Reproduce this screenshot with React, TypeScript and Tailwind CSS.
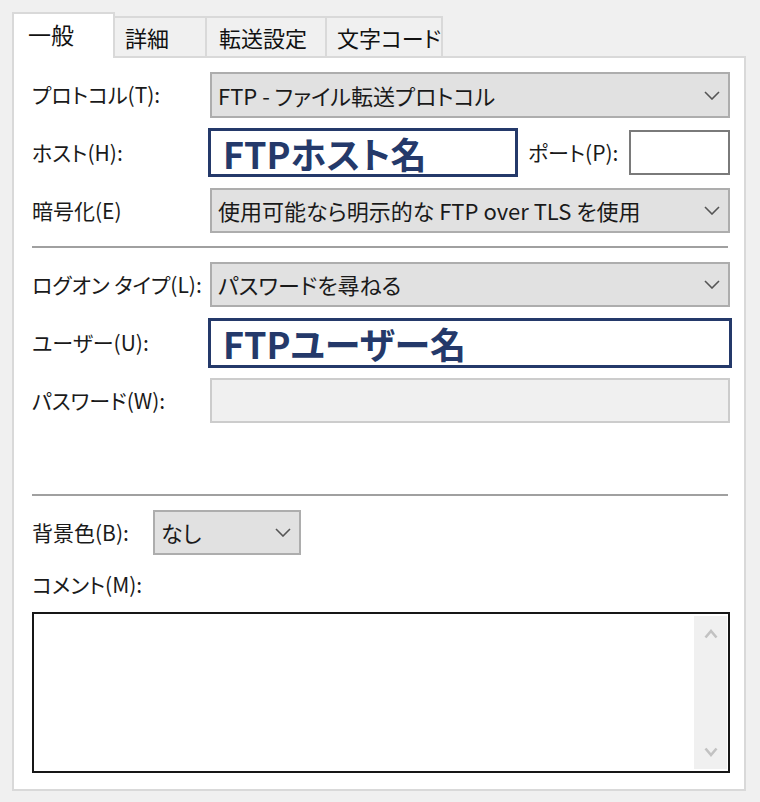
import React from 'react';

const font = "font-['Noto_Sans_CJK_JP','Noto_Sans',sans-serif] [font-feature-settings:'palt']";

function Chevron() {
  return (
    <svg width="16" height="9" viewBox="0 0 16 9" className="shrink-0">
      <polyline points="1,1 8,8 15,1" fill="none" stroke="#555555" strokeWidth="1.6" />
    </svg>
  );
}

function Select({ value, className = '' }: { value: string; className?: string }) {
  return (
    <div
      className={`flex items-center justify-between bg-[#e1e1e1] border-2 border-[#adadad] pl-[6px] pr-[8px] text-[22px] text-[#1a1a1a] ${className}`}
    >
      <span className="whitespace-nowrap">{value}</span>
      <Chevron />
    </div>
  );
}

function Label({ text, className = 'w-[178px]' }: { text: string; className?: string }) {
  return <div className={`shrink-0 text-[21px] text-[#1a1a1a] whitespace-nowrap ${className}`}>{text}</div>;
}

function NavyInput({ value, className = '' }: { value: string; className?: string }) {
  return (
    <div
      className={`flex items-center border-[3px] border-[#24396a] pl-[12px] text-[36px] font-bold text-[#24396a] leading-none ${className}`}
    >
      {value}
    </div>
  );
}

export default function App() {
  const tabs = [
    { label: '詳細', w: 'w-[92px]', pl: 'pl-[10px]' },
    { label: '転送設定', w: 'w-[120px]', pl: 'pl-[12px]' },
    { label: '文字コード', w: 'w-[116px]', pl: 'pl-[10px]' },
  ];

  return (
    <div className={`w-[760px] h-[802px] bg-[#f0f0f0] pt-[12px] pl-[12px] pr-[14px] ${font}`}>
      {/* tabs */}
      <div className="flex items-end h-[44px]">
        <div className="relative z-10 w-[103px] h-[46px] -mb-[2px] bg-white border-2 border-b-0 border-[#d9d9d9] pl-[14px] pt-[4px] text-[23px] leading-[32px] text-[#111]">
          一般
        </div>
        {tabs.map((tab) => (
          <div
            key={tab.label}
            className={`${tab.w} ${tab.pl} h-[40px] bg-[#f0f0f0] border-t-2 border-r-2 border-[#d9d9d9] pt-[3px] text-[22px] leading-[32px] text-[#111] whitespace-nowrap`}
          >
            {tab.label}
          </div>
        ))}
      </div>

      {/* panel */}
      <div className="bg-white border-2 border-[#d9d9d9] pt-[14px] pb-[16px] pl-[18px] pr-[14px]">
        <div className="flex items-center h-[46px]">
          <Label text="プロトコル(T):" />
          <Select value="FTP - ファイル転送プロトコル" className="flex-1 h-[46px]" />
        </div>

        <div className="flex items-center h-[49px] mt-[10px]">
          <Label text="ホスト(H):" />
          <NavyInput value="FTPホスト名" className="-ml-[2px] w-[310px] h-[49px]" />
          <Label text="ポート(P):" className="ml-[10px] w-[101px]" />
          <div className="w-[101px] h-[45px] border-2 border-[#7a7a7a] bg-white" />
        </div>

        <div className="flex items-center h-[45px] mt-[11px]">
          <Label text="暗号化(E)" />
          <Select value="使用可能なら明示的な FTP over TLS を使用" className="flex-1 h-[45px]" />
        </div>

        <div className="h-[2px] bg-[#a0a0a0] mt-[13px] mr-[2px]" />

        <div className="flex items-center h-[45px] mt-[14px]">
          <Label text="ログオン タイプ(L):" />
          <Select value="パスワードを尋ねる" className="flex-1 h-[45px]" />
        </div>

        <div className="flex items-center h-[50px] mt-[11px]">
          <Label text="ユーザー(U):" />
          <NavyInput value="FTPユーザー名" className="-mx-[2px] flex-1 h-[50px]" />
        </div>

        <div className="flex items-center h-[45px] mt-[10px]">
          <Label text="パスワード(W):" />
          <div className="flex-1 h-[45px] border-2 border-[#cccccc] bg-[#f0f0f0]" />
        </div>

        <div className="h-[2px] bg-[#a0a0a0] mt-[71px] mr-[2px]" />

        <div className="flex items-center h-[45px] mt-[14px]">
          <Label text="背景色(B):" className="w-[121px]" />
          <Select value="なし" className="w-[148px] h-[45px]" />
        </div>

        <div className="flex items-center h-[30px] mt-[15px]">
          <Label text="コメント(M):" />
        </div>

        <div className="mt-[12px] h-[161px] border-2 border-[#171717] bg-white flex justify-end py-[2px] pr-[1px]">
          <div className="w-[33px] bg-[#f0f0f0] flex flex-col items-center justify-between pt-[12px] pb-[11px]">
            <svg width="14" height="11" viewBox="0 0 14 11">
              <polyline points="1.5,9.5 7,3 12.5,9.5" fill="none" stroke="#c2c2c2" strokeWidth="2.6" />
            </svg>
            <svg width="14" height="11" viewBox="0 0 14 11">
              <polyline points="1.5,1.5 7,8 12.5,1.5" fill="none" stroke="#c2c2c2" strokeWidth="2.6" />
            </svg>
          </div>
        </div>
      </div>
    </div>
  );
}
